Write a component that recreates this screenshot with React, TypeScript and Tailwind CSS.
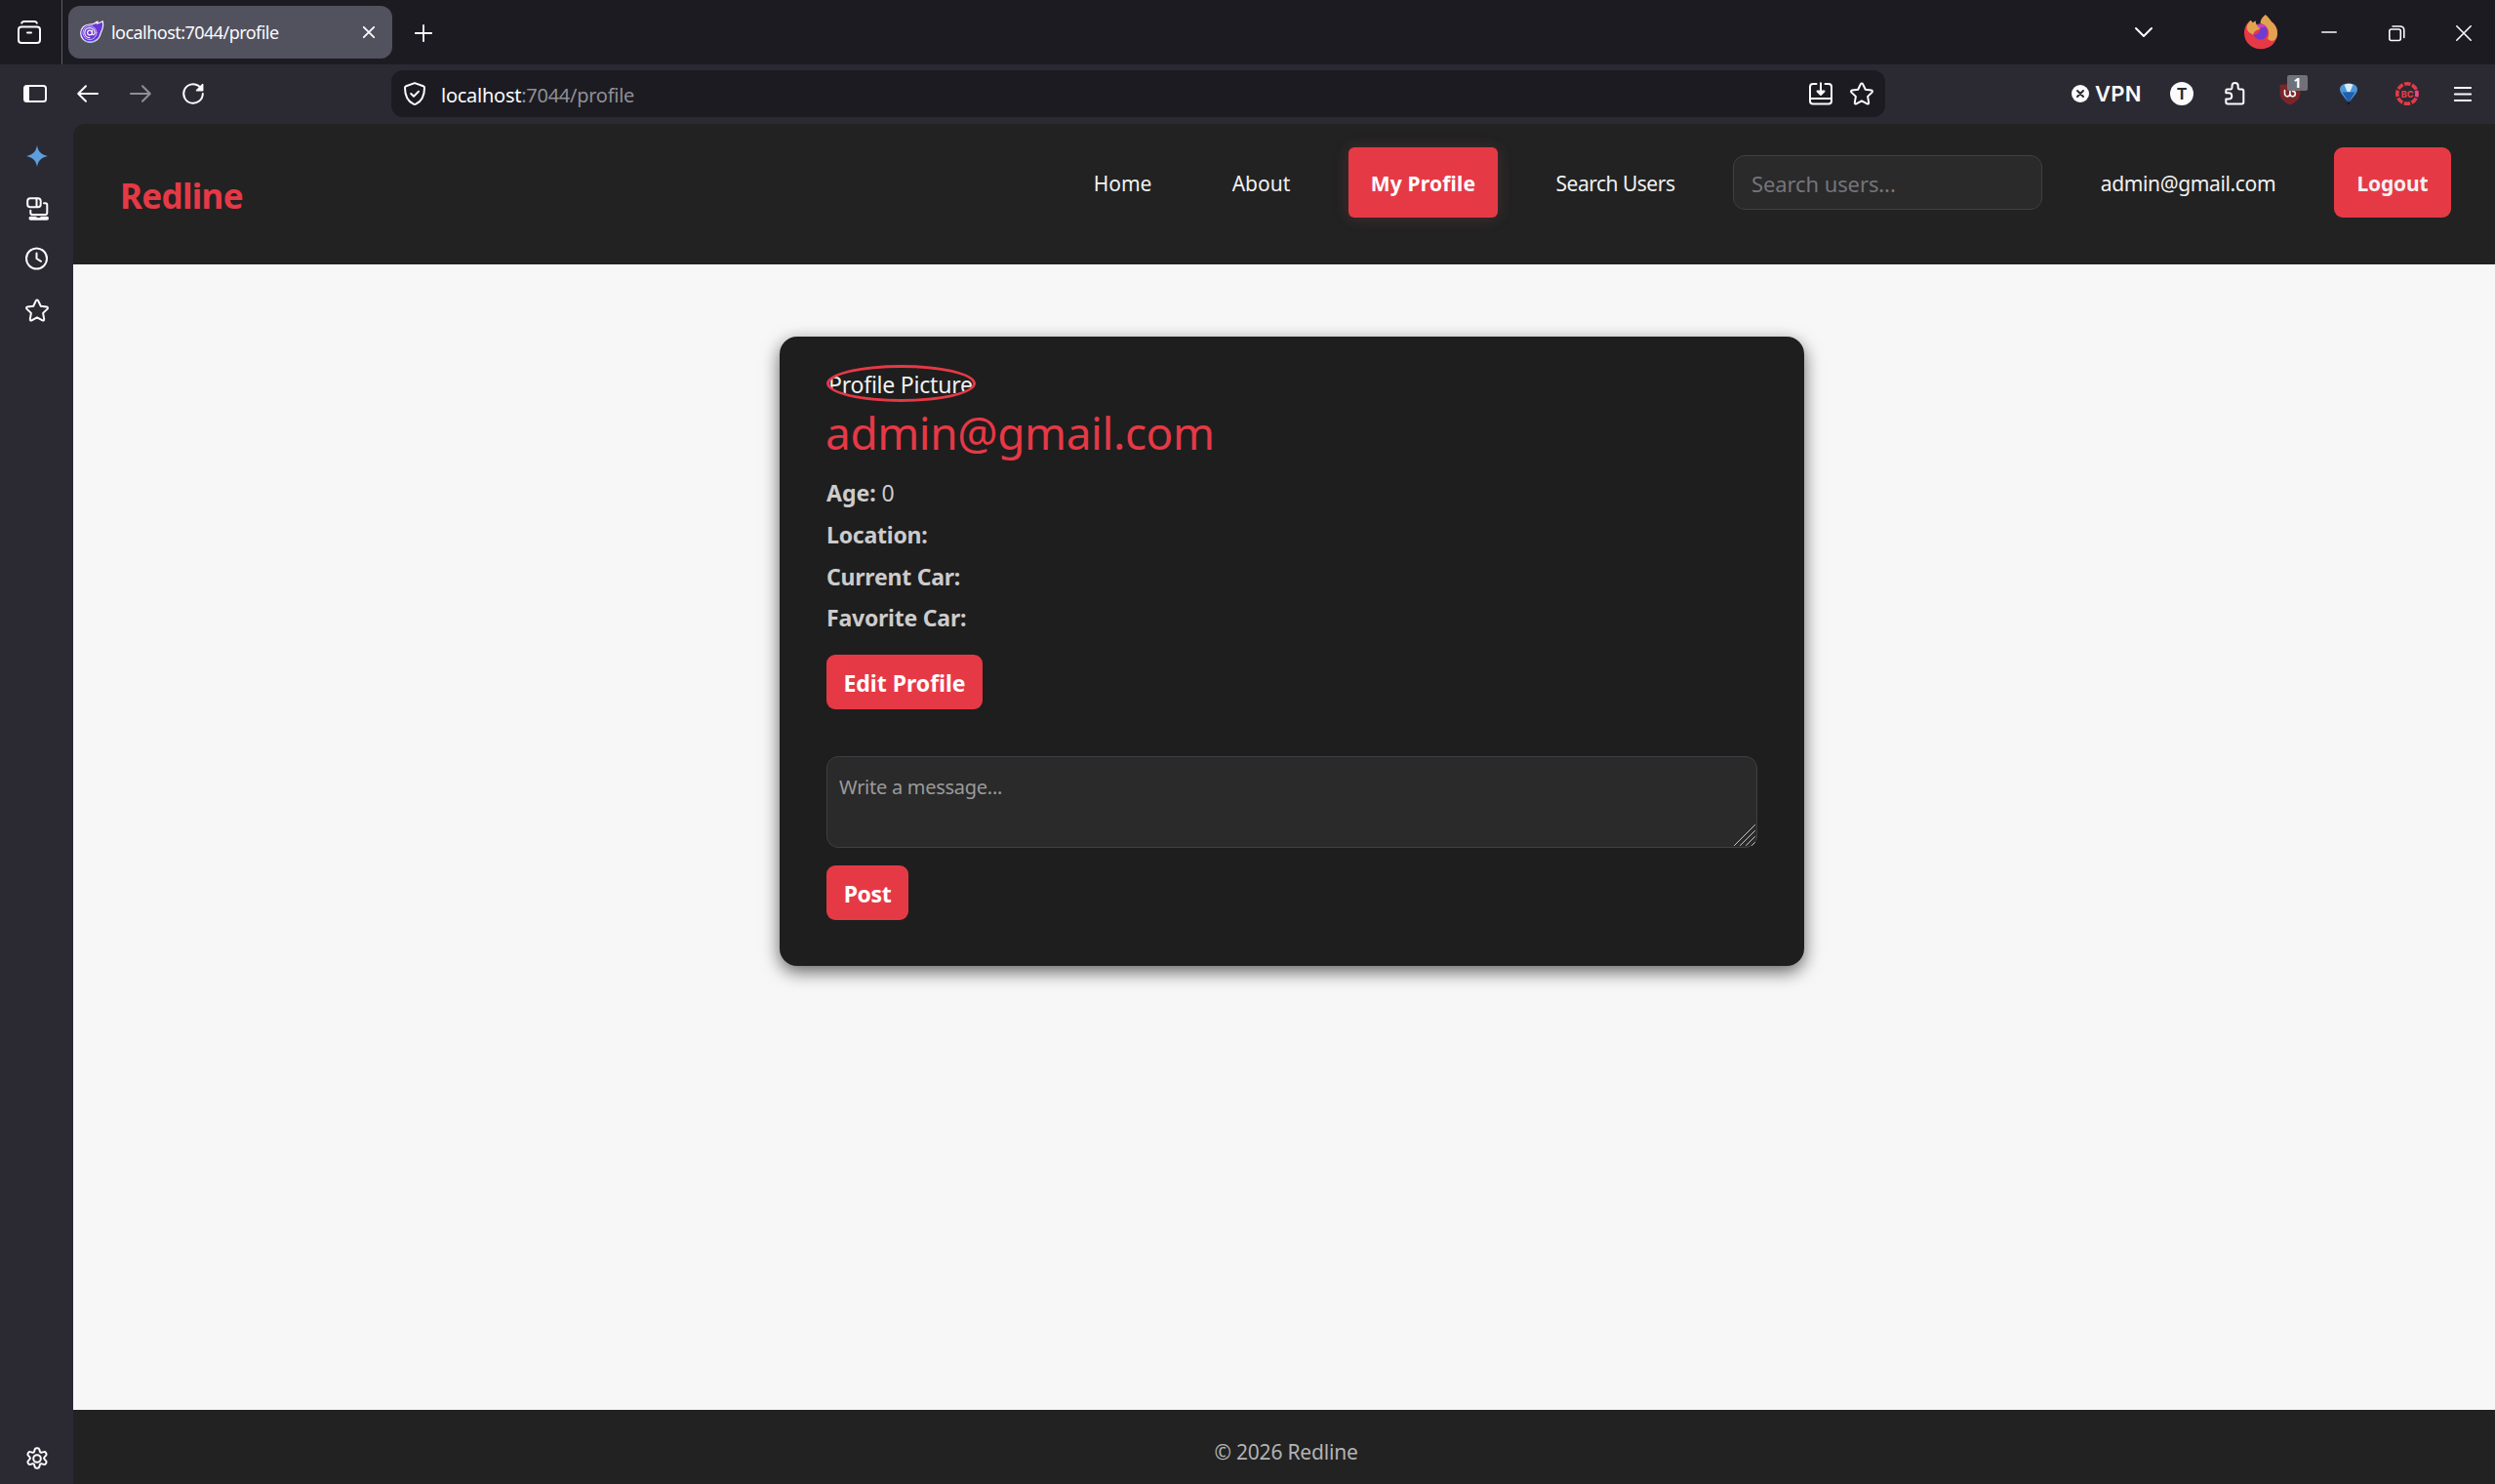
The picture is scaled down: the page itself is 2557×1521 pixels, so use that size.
import type { ReactNode } from 'react';

type IconProps = { w: number; h: number; className?: string; stroke?: number; children: ReactNode };

function Icon({ w, h, className = '', stroke = 2, children }: IconProps) {
  return (
    <svg
      width={w}
      height={h}
      viewBox={`0 0 ${w} ${h}`}
      fill="none"
      stroke="currentColor"
      strokeWidth={stroke}
      strokeLinecap="round"
      strokeLinejoin="round"
      className={`block shrink-0 overflow-visible ${className}`}
    >
      {children}
    </svg>
  );
}

const STAR =
  'M12 1.4c.5 0 .9.3 1.1.7l2.7 5.7 6.1.8c1.1.2 1.4 1.3.7 2l-4.5 4.3 1.1 6.3c.2 1-.8 1.7-1.7 1.2L12 19.3l-5.5 3.1c-.9.5-1.9-.2-1.7-1.2l1.1-6.3-4.5-4.3c-.7-.7-.4-1.800.7-2l6.100-.8 2.700-5.700c.2-.4.6-.7 1.100-.7z';

function StarIcon({ className }: { className?: string }) {
  return (
    <Icon w={24} h={24} className={className}>
      <path d={STAR} />
    </Icon>
  );
}

function BlazorIcon() {
  return (
    <Icon w={24} h={24} stroke={1.2}>
      <path
        d="M23.400.8c.5 2.600.4 5.500-.5 8.100-.6 1.700-1.300 2.700-1.700 4.300-1.100 5.400-5.400 9.200-10.700 9.200C4.800 22.400.7 18.300.7 13 .7 7.800 4.800 4 9.900 4c3.300 0 5.400-.6 8.100-3-.1 1-.3 1.500-.6 2.100C19.700 2.500 21.600 1.900 23.400.8z"
        fill="#6a37d6"
        stroke="#f3f0fc"
      />
      <circle cx="10" cy="12.600" r="7" stroke="#c3b2f0" strokeWidth="1" />
      <circle cx="10" cy="12.600" r="2.400" stroke="#f3f0fc" strokeWidth="1.300" />
      <path d="M12.500 10v3.400c0 2 2.700 1.700 2.700-.8 0-3-2.200-5-5.200-5s-5.200 2.200-5.200 5 2.200 5 5 5" stroke="#f3f0fc" strokeWidth="1.200" />
      <path d="M5 20.800c3 1.700 7.800 1.700 11-.6" stroke="#7fc4ec" strokeWidth="1.300" />
    </Icon>
  );
}

function FirefoxAvatar() {
  return (
    <Icon w={34} h={36} stroke={0} className="ml-[94px]">
      <path
        d="M5.500 6.500C1.500 10.300 0 14 0 19.200 0 28 7.400 35.300 17 35.300S34 28.300 34 19.200c0-5-1.700-8.600-4.600-11.200L22 10 9 12z"
        fill="#e63946"
      />
      <path
        d="M21.700 0c3.900 3 5.200 6 7.300 8.200 3.500 3.200 5 6.600 5 11 0 3.500-1.600 6.600-4.300 7.600-1.900.6-4.600-.8-5.900-2.300 3-5.500 1.600-13-7.300-15.300C16.300 5.500 18.800 2.400 21.700 0z"
        fill="#e2a350"
      />
      <path
        d="M6.700 5.800c.9 1 1.400 1.800 2 2.500C9.500 7.500 10.700 6.800 11.800 6.600c-.1 1.500.3 2.900 1.300 4.100 2.200.4 3.500 1 3.600 2.500-2 3.500-7 2.400-7.300 7.300C5.600 19 2.700 17 2.600 13.200 2.900 10.400 4.500 7.800 6.700 5.800z"
        fill="#e2a350"
      />
      <path
        d="M15.500 9.500c5.500-.8 8.800 3.900 8.200 9-.5 4.500-3.300 7.200-7 7.200-4 0-6.800-2.700-6.900-5.600 2.500 1.700 5.200-1.500 7-4.600.4-2-.9-3.600-3.500-4.600z"
        fill="#6f3bd2"
      />
      <path d="M12.500 10c3.400-1.400 8.700-.2 9.700 2.400l-7.300 1z" fill="#c43fc8" />
    </Icon>
  );
}

function TitleBar() {
  return (
    <div className="flex h-[66px] items-center bg-[#1c1b22] pr-6">
      <div className="flex h-full w-16 items-center border-r border-[#5b5b66] pl-[18px]">
        <Icon w={24} h={24}>
          <rect x="1" y="6.500" width="22" height="16.500" rx="3" />
          <path d="M4.200 2.600C4.800 1.500 5.500 1 6.500 1h11c1 0 1.700.5 2.300 1.600M10 12.500h4" />
        </Icon>
      </div>
      <div className="ml-1.5 flex h-[54px] w-[332px] items-center rounded-[12px] bg-[#52525e] pr-[18px] pl-3">
        <BlazorIcon />
        <span className="ml-2 text-[18px] leading-7 tracking-[-0.54px]">localhost:7044/profile</span>
        <Icon w={12} h={12} className="ml-auto" stroke={1.8}>
          <path d="M.8.8l10.400 10.400M11.200.8L.8 11.200" />
        </Icon>
      </div>
      <Icon w={18} h={18} className="mt-0.5 ml-[23px]" stroke={1.8}>
        <path d="M9 .8v16.400M.8 9h16.400" />
      </Icon>
      <Icon w={18} h={10} className="ml-auto">
        <path d="M1 1l8 8 8-8" />
      </Icon>
      <FirefoxAvatar />
      <Icon w={16} h={2} className="ml-[45px]" stroke={1.6}>
        <path d="M.8 1h14.400" />
      </Icon>
      <Icon w={17} h={16} className="mt-px ml-[53px]" stroke={1.6}>
        <rect x=".8" y="4" width="11.500" height="11.500" rx="2" />
        <path d="M4 1h7.500C14 1 15.800 2.600 15.800 5v7.500" />
      </Icon>
      <Icon w={16} h={16} className="mt-px ml-[52px]" stroke={1.6}>
        <path d="M.8.8l14.400 14.400M15.200.8L.8 15.200" />
      </Icon>
    </div>
  );
}

function UrlBar() {
  return (
    <div className="ml-48 flex h-12 w-[1531px] items-center rounded-[12px] bg-[#1c1b22] pr-3 pl-[13px]">
      <Icon w={22} h={24}>
        <path d="M11 1.100l8.800 3.200c.8.3 1.200.8 1.200 1.600 0 8-2.200 13.500-8.800 16.700-.8.4-1.600.4-2.400 0C3.200 19.400 1 13.900 1 5.900c0-.8.4-1.300 1.200-1.600z" />
        <path d="M7.200 12l2.800 2.700 5-5" />
      </Icon>
      <span className="ml-4 pt-[3px] text-[20px] leading-8 tracking-[-0.26px] text-[#8f8f96]">
        <span className="text-[#fbfbfe]">localhost</span>:7044/profile
      </span>
      <Icon w={24} h={24} className="ml-auto">
        <path d="M7.500 2H4a3 3 0 0 0-3 3v14.500a3 3 0 0 0 3 3h16a3 3 0 0 0 3-3V5a3 3 0 0 0-3-3h-3.500M1.500 17h21" />
        <path d="M12 .5v9.500" strokeLinecap="butt" />
        <path d="M8.500 9.500h7L12 13z" fill="currentColor" />
      </Icon>
      <StarIcon className="ml-[18px]" />
    </div>
  );
}

function Extensions() {
  return (
    <>
      <Icon w={18} h={18} className="ml-[191px]">
        <circle cx="9" cy="9" r="9" fill="currentColor" stroke="none" />
        <path d="M6 6l6 6M12 6l-6 6" stroke="#2b2a33" />
      </Icon>
      <span className="ml-1.5 w-12 font-['Inter',sans-serif] text-[22px] leading-8 font-semibold tracking-[0.3px]">VPN</span>
      <span className="ml-[29px] flex size-6 items-center justify-center rounded-full bg-[#fbfbfe] font-['Inter',sans-serif] text-[16px] leading-none font-bold text-[#2b2a33]">
        T
      </span>
      <Icon w={22} h={24} className="ml-8">
        <path d="M1.300 11.300V8.700c0-.7.5-1.200 1.200-1.200h3.700c.9 0 1.300-.6 1.300-1.400V4.200a3.100 3.100 0 0 1 6.200 0v1.900c0 .8.400 1.400 1.300 1.400h2.600c1 0 1.700.7 1.700 1.700v11.600c0 1-.7 1.700-1.700 1.700H3c-1 0-1.700-.7-1.700-1.700v-3.300h2.900a3.100 3.100 0 0 0 0-6.200z" />
      </Icon>
      <div className="relative ml-[34px]">
        <Icon w={22} h={24}>
          <path d="M11 .8c3 1.700 6.500 2.200 10.500 2.200v8c0 6-4 9.500-10.500 12.600C4.500 20.500.5 17 .5 11V3C4.500 3 8 2.500 11 .8z" fill="#7c2529" stroke="none" />
          <path d="M5.500 8.500v3.600a2.700 2.700 0 0 0 5.400 0V9.500M10.900 12.100a2.700 2.700 0 1 0 2.700-2.700" stroke="#f2f2f2" strokeWidth="1.700" />
        </Icon>
        <span className="absolute -top-[7px] left-2 flex h-4 w-[21px] items-center justify-center rounded-[2px] bg-[#717178] text-[14px] leading-none font-bold text-white">
          1
        </span>
      </div>
      <Icon w={18} h={23} className="ml-10" stroke={0}>
        <path d="M0 6.500C0 2.500 4 .5 9 .5s9 2 9 6c0 4-6 9.500-7.500 12h-3C6 16 0 10.500 0 6.500z" fill="#4e97d6" />
        <path d="M2.500 9.500L15.500 9.500C13.500 13 11 16 10.300 18.500H7.700C7 16 4.500 13 2.500 9.500z" fill="#1f5fae" />
        <path d="M4.500 1.800C7.500.4 11 .5 13.500 1.800L10.500 9h-3z" fill="#e9f4fb" opacity=".9" />
        <path d="M7.800 20h2.400v2H7.800z" fill="#101828" />
      </Icon>
      <div className="relative ml-[39px]">
        <Icon w={24} h={24} stroke={3.6}>
          <circle cx="12" cy="12" r="10.200" stroke="#e63946" strokeLinecap="butt" strokeDasharray="6.410 1.600" strokeDashoffset="3.200" />
          <path d="M21 8.800q1.600 3.200 0 6.400" stroke="#e54a9b" strokeWidth="3" strokeLinecap="butt" />
        </Icon>
        <span className="absolute inset-0 flex items-center justify-center font-['Inter',sans-serif] text-[9px] leading-none font-extrabold text-[#e63946]">
          BC
        </span>
      </div>
      <Icon w={18} h={15} className="ml-9" stroke={1.8}>
        <path d="M.8 1h16.400M.8 7.500h16.400M.8 14h16.400" />
      </Icon>
    </>
  );
}

function Toolbar() {
  return (
    <div className="flex h-[61px] items-center bg-[#2b2a33] pr-6 pb-px pl-6">
      <Icon w={24} h={18}>
        <rect x="1" y="1" width="22" height="16" rx="2.500" />
        <path d="M2 1.500h3.500v15H2z" fill="currentColor" strokeWidth="1" />
      </Icon>
      <Icon w={22} h={18} className="ml-[31px]">
        <path d="M21 9H1.500M9 1.200L1.200 9 9 16.800" />
      </Icon>
      <Icon w={22} h={18} className="ml-8 text-[#8f8f96]">
        <path d="M1 9h19.500M13 1.200L20.800 9 13 16.800" />
      </Icon>
      <Icon w={22} h={22} className="ml-8">
        <path d="M20.800 11A9.800 9.800 0 1 1 16.500 2.900L19.500 6" />
        <path d="M20.700 1.500v6.200h-6.200z" fill="currentColor" strokeWidth="1.500" />
      </Icon>
      <UrlBar />
      <Extensions />
    </div>
  );
}

function Sidebar() {
  return (
    <div className="flex w-[75px] shrink-0 flex-col items-center bg-[#2b2a33] pt-[21px] pb-3.5 pl-px">
      <Icon w={24} h={24} stroke={0}>
        <path d="M12 1c1.300 6.500 4 9.400 10.800 11C16 13.600 13.300 16.500 12 23c-1.300-6.500-4-9.400-10.800-11C8 10.400 10.700 7.500 12 1z" fill="#5c9fdc" />
      </Icon>
      <Icon w={24} h={24} className="mt-[30px]">
        <rect x="2.200" y="1.200" width="13.500" height="9" rx="2.800" />
        <path d="M11.500 1.500v8.500M5.300 13.800v2.400c0 1.300.8 1.800 2 1.800h13c1.300 0 2-.8 2-2V8c0-1.200-.7-1.700-1.800-1.700h-1.500" />
        <path d="M5.500 21.700h16.500" strokeWidth="4" />
        <path d="M12 20.300h3" stroke="#2b2a33" strokeWidth="1.200" />
      </Icon>
      <Icon w={24} h={24} className="mt-[27px]">
        <circle cx="11.500" cy="12" r="10.500" />
        <path d="M11.500 6.500V12l4.500 2.800" />
      </Icon>
      <StarIcon className="mt-[29px]" />
      <Icon w={24} h={24} className="mt-auto">
        <circle cx="12" cy="12" r="3.800" />
        <path d="M9.700 2.600c.3-1 .9-1.400 1.700-1.400h1.200c.8 0 1.400.4 1.700 1.400l.6 2.200c.2.700.9 1.100 1.600.9l2.200-.6c1-.3 1.700 0 2.100.7l.6 1c.4.700.3 1.400-.4 2.100l-1.600 1.700c-.5.600-.5 1.300 0 1.800l1.600 1.700c.7.700.8 1.400.4 2.100l-.6 1c-.4.700-1.100 1-2.100.7l-2.200-.6c-.7-.2-1.400.2-1.600.9l-.6 2.200c-.3 1-.9 1.400-1.700 1.400h-1.200c-.8 0-1.400-.4-1.700-1.400l-.6-2.200c-.2-.7-.9-1.100-1.600-.9l-2.200.6c-1 .3-1.700 0-2.100-.7l-.6-1c-.4-.7-.3-1.400.4-2.100l1.600-1.700c.5-.5.5-1.200 0-1.800L3 8.900c-.7-.7-.8-1.400-.4-2.100l.6-1c.4-.7 1.100-1 2.100-.7l2.200.6c.7.2 1.400-.2 1.600-.9z" />
      </Icon>
    </div>
  );
}

function NavBar() {
  return (
    <header className="flex h-36 items-start justify-between rounded-tl-[12px] bg-[#222222] pt-6 pr-[45px] pl-12">
      <a className="mt-[23px] text-[35px] leading-[54px] font-bold tracking-[-0.65px] text-[#e63946]">Redline</a>
      <nav className="flex h-[72px] items-center gap-9 text-[21px] leading-9 text-[#f1f1f1]">
        <a className="flex h-full w-[106px] items-center justify-center pt-0.5 pl-px">Home</a>
        <a className="flex h-full w-[107px] items-center justify-center pt-0.5">About</a>
        <a className="flex h-full w-[153px] items-center justify-center rounded-[6px] bg-[#e63946] pt-0.5 font-bold tracking-[0.2px] text-white shadow-[0_1px_15px_rgba(190,90,95,0.22)]">
          My Profile
        </a>
        <a className="flex h-full w-[169px] items-center justify-center pt-0.5 tracking-[-0.5px]">Search Users</a>
        <div className="flex h-14 w-[317px] items-center rounded-[12px] border border-[#3f3f46] bg-[#2a2a2a] pt-px pl-[18px] text-[22px] tracking-[-0.1px] text-[#75757a]">
          Search users...
        </div>
        <span className="flex h-full w-[227px] items-center justify-center pt-0.5 tracking-[-0.36px]">admin@gmail.com</span>
        <a className="flex h-full w-[120px] items-center justify-center rounded-[9px] bg-[#e63946] pt-0.5 font-bold tracking-[-0.2px]">
          Logout
        </a>
      </nav>
    </header>
  );
}

const BUTTON =
  'flex h-14 items-center justify-center rounded-[9px] bg-[#e63946] pt-0.5 text-[23px] leading-9 font-bold text-white';

function ProfileCard() {
  return (
    <section className="mt-[74px] ml-[724px] h-[645px] w-[1050px] rounded-[18px] bg-[#1e1e1e] px-12 pt-[29px] shadow-[0_6px_18px_rgba(0,0,0,0.6)]">
      <div className="flex h-[38px] w-[153px] items-center overflow-hidden rounded-[50%] border-[3px] border-[#e63946] pt-0.5 text-[23px] leading-8 tracking-[-0.22px] whitespace-nowrap text-[#f1f1f1]">
        <span className="-ml-px">Profile Picture</span>
      </div>
      <h1 className="mt-1 -ml-px text-[46px] leading-[54px] tracking-[-0.42px] text-[#e63946]">admin@gmail.com</h1>
      <div className="mt-3.5 text-[23px] tracking-[-0.22px] text-[#cccccc]">
        <p className="leading-[43px]">
          <strong className="tracking-normal">Age:</strong> 0
        </p>
        <p className="leading-[43px] font-bold">Location:</p>
        <p className="leading-[42px] font-bold">Current Car:</p>
        <p className="leading-[43px] font-bold">Favorite Car:</p>
      </div>
      <button className={`${BUTTON} mt-4 w-40`}>Edit Profile</button>
      <div className="relative mt-12 h-[94px] w-[954px] rounded-[12px] border border-[#3f3f46] bg-[#2a2a2a] pt-4 pl-3 text-[20px] leading-[30px] tracking-[-0.27px] text-[#9a9a9a]">
        Write a message...
        <Icon w={22} h={22} className="absolute right-px bottom-px text-[#c8c8c8]" stroke={1}>
          <path d="M.5 21.500l21-21M6.500 21.500l15-15M12.500 21.500l9-9M18.500 21.500l3-3" />
        </Icon>
      </div>
      <button className={`${BUTTON} mt-[18px] w-[84px] tracking-[-0.4px]`}>Post</button>
    </section>
  );
}

export default function App() {
  return (
    <div className="flex h-[1521px] w-[2557px] flex-col overflow-hidden bg-[#2b2a33] font-['Noto_Sans','Open_Sans',sans-serif] text-[#fbfbfe]">
      <TitleBar />
      <Toolbar />
      <div className="flex min-h-0 flex-1">
        <Sidebar />
        <div className="flex min-w-0 flex-1 flex-col">
          <NavBar />
          <main className="flex-1 bg-[#f7f7f7]">
            <div className="flex">
              <ProfileCard />
            </div>
          </main>
          <footer className="h-[76px] bg-[#222222] pt-[25px] pl-1 text-center text-[21px] leading-9 tracking-[-0.2px] text-[#b3b3b3]">
            © 2026 Redline
          </footer>
        </div>
      </div>
    </div>
  );
}
